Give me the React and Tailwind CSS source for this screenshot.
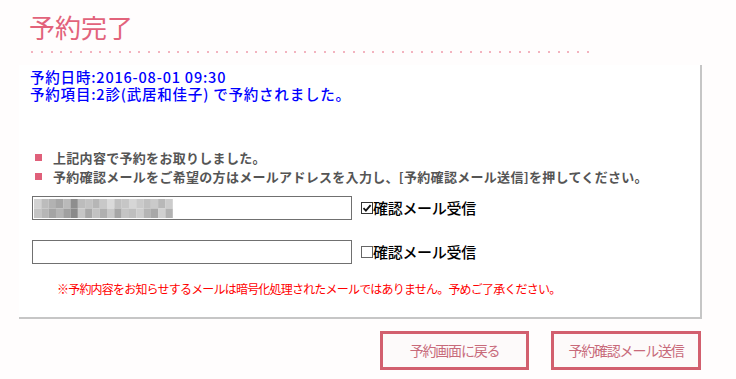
import React from "react";

const row1 = ["#d2d2d2","#bcbcbc","#b2b2b2","#a6a6a6","#bababa","#8e8e8e","#bcbcbc","#c2c2c2","#b6b6b6","#c8c8c8","#dadada","#c0c0c0","#c6c6c6","#d6d6d6","#cacaca","#c0c0c0","#cacaca","#b8b8b8","#cccccc"];
const row2 = ["#c4c4c4","#b6b6b6","#a4a4a4","#b4b4b4","#a0a0a0","#8a8a8a","#c6c6c6","#a8a8a8","#c2c2c2","#b0b0b0","#c8c8c8","#a6a6a6","#c4c4c4","#bebebe","#cccccc","#b4b4b4","#a8a8a8","#d0d0d0","#b2b2b2"];

function Mosaic() {
  return (
    <svg width="140" height="19" viewBox="0 0 140 19" className="block">
      {row1.map((c, i) => (
        <rect key={"a" + i} x={i * 7.3} y="0" width="7.4" height="9.5" fill={c} />
      ))}
      {row2.map((c, i) => (
        <rect key={"b" + i} x={i * 7.3} y="9.5" width="7.4" height="9.5" fill={c} />
      ))}
    </svg>
  );
}

function CheckBox({ checked }) {
  return (
    <svg width="12" height="12" viewBox="0 0 12 12" className="block">
      <rect x="0.5" y="0.5" width="11" height="11" fill="#fff" stroke={checked ? "#333" : "#666"} strokeWidth="1" />
      {checked && (
        <path d="M2.5 6.2 L4.9 8.6 L9.6 3.2" fill="none" stroke="#111" strokeWidth="1.8" />
      )}
    </svg>
  );
}

function EmailRow({ checked, filled }) {
  return (
    <div className="flex items-center">
      <div className="w-[320px] h-[24px] border border-[#707070] bg-white flex items-center pl-[1px]">
        {filled && <Mosaic />}
      </div>
      <div className="ml-[9px] flex items-center">
        <CheckBox checked={checked} />
        <span className="text-[15px] leading-[18px] text-black font-medium tracking-[-0.3px]">確認メール受信</span>
      </div>
    </div>
  );
}

export default function App() {
  const dots = Array.from({ length: 58 });
  return (
    <div className="w-[736px] h-[379px] overflow-hidden bg-[#fffdfd] font-['Noto_Sans_CJK_JP',sans-serif]">
      <div className="pt-[14px] pl-[29px] text-[26px] leading-[26px] text-[#e2637b]">予約完了</div>
      <div className="mt-[11px] ml-[31px] flex gap-[7.75px]">
        {dots.map((_, i) => (
          <span key={i} className="block w-[2px] h-[2px] rounded-full bg-[#ef9aaa]" />
        ))}
      </div>
      <div className="mt-[12px] ml-[19px] w-[683px] bg-white border-r-2 border-b-2 border-[#c6c6c6] pt-[3px] pb-[20px]">
        <div className="pl-[11px] text-[14.5px] leading-[17px] tracking-[0.8px] text-[#0000ff] font-medium">
          <div>予約日時:2016-08-01 09:30</div>
          <div>予約項目:2診(武居和佳子) で予約されました。</div>
        </div>
        <div className="mt-[46px] pl-[16px] text-[13px] leading-[19px] tracking-[0.3px] font-bold text-[#555555]">
          <div className="flex items-center">
            <span className="block w-[7px] h-[7px] bg-[#e0607a] mr-[11px]" />
            <span>上記内容で予約をお取りしました。</span>
          </div>
          <div className="flex items-center">
            <span className="block w-[7px] h-[7px] bg-[#e0607a] mr-[11px]" />
            <span>予約確認メールをご希望の方はメールアドレスを入力し、[予約確認メール送信]を押してください。</span>
          </div>
        </div>
        <div className="mt-[10px] pl-[13px]">
          <EmailRow checked filled />
          <div className="mt-[20px]">
            <EmailRow checked={false} />
          </div>
        </div>
        <div className="mt-[17px] pl-[38px] text-[12px] leading-[16px] tracking-[-0.8px] text-[#ff0000]">
          ※予約内容をお知らせするメールは暗号化処理されたメールではありません。予めご了承ください。
        </div>
      </div>
      <div className="mt-[12px] w-[701px] flex justify-end gap-[22px]">
        <button className="w-[149px] h-[39px] border-[3px] border-[#d25f6e] bg-[#fdfafa] text-[14px] tracking-[-1.2px] text-[#c86a7a] flex items-center justify-center">
          予約画面に戻る
        </button>
        <button className="w-[150px] h-[39px] border-[3px] border-[#d25f6e] bg-[#fdfafa] text-[14px] tracking-[-1.2px] text-[#c86a7a] flex items-center justify-center">
          予約確認メール送信
        </button>
      </div>
    </div>
  );
}
